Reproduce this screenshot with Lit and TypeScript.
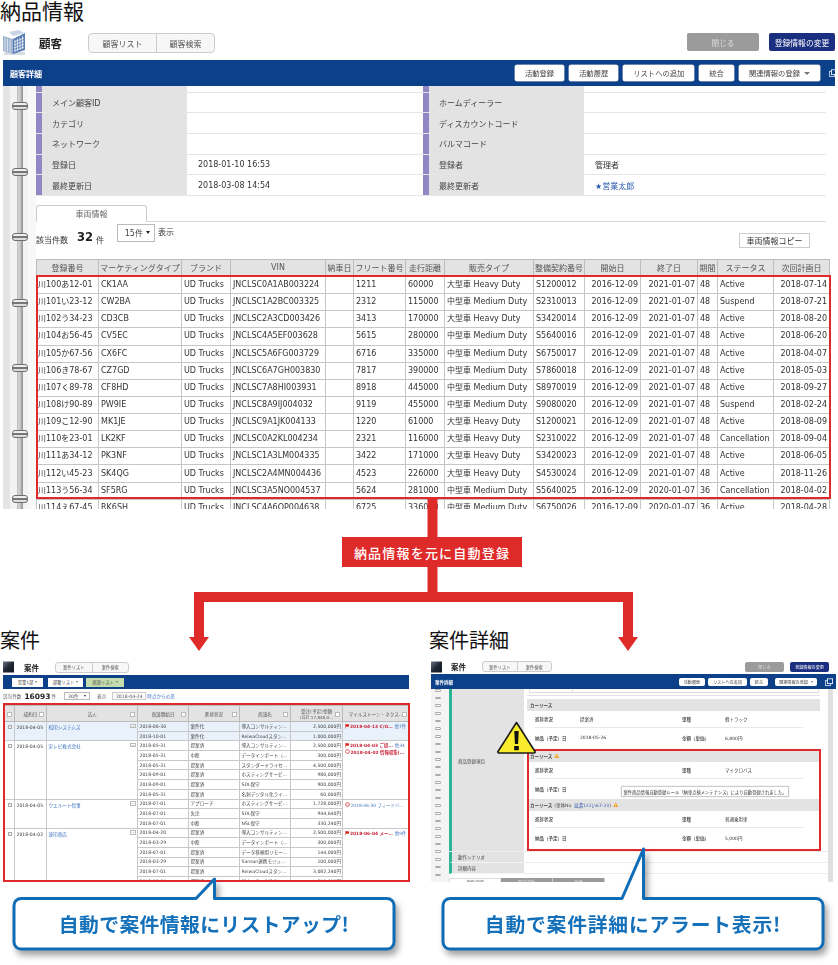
import { LitElement, html, css, svg } from "lit";
import { customElement } from "lit/decorators.js";

type Row = string[];
const H = "大型車 Heavy Duty";
const M = "中型車 Medium Duty";
const D1 = "2016-12-09";
const D2 = "2021-01-07";
const vehicleRows: Row[] = [
  ["川100あ12-01","CK1AA","JNCLSC0A1AB003224","1211","60000",H,"S1200012",D2,"48","Active","2018-07-14"],
  ["川101い23-12","CW2BA","JNCLSC1A2BC003325","2312","115000",M,"S2310013",D2,"48","Suspend","2018-07-21"],
  ["川102う34-23","CD3CB","JNCLSC2A3CD003426","3413","170000",H,"S3420014",D2,"48","Active","2018-08-20"],
  ["川104お56-45","CV5EC","JNCLSC4A5EF003628","5615","280000",M,"S5640016",D2,"48","Active","2018-06-20"],
  ["川105か67-56","CX6FC","JNCLSC5A6FG003729","6716","335000",M,"S6750017",D2,"48","Active","2018-04-07"],
  ["川106き78-67","CZ7GD","JNCLSC6A7GH003830","7817","390000",M,"S7860018",D2,"48","Active","2018-05-03"],
  ["川107く89-78","CF8HD","JNCLSC7A8HI003931","8918","445000",M,"S8970019",D2,"48","Active","2018-09-27"],
  ["川108け90-89","PW9IE","JNCLSC8A9IJ004032","9119","455000",M,"S9080020",D2,"48","Suspend","2018-02-24"],
  ["川109こ12-90","MK1JE","JNCLSC9A1JK004133","1220","61000",H,"S1200021",D2,"48","Active","2018-08-09"],
  ["川110を23-01","LK2KF","JNCLSC0A2KL004234","2321","116000",H,"S2310022",D2,"48","Cancellation","2018-09-04"],
  ["川111あ34-12","PK3NF","JNCLSC1A3LM004335","3422","171000",H,"S3420023",D2,"48","Active","2018-06-05"],
  ["川112い45-23","SK4QG","JNCLSC2A4MN004436","4523","226000",H,"S4530024",D2,"48","Active","2018-11-26"],
  ["川113う56-34","SF5RG","JNCLSC3A5NO004537","5624","281000",M,"S5640025","2020-01-07","36","Cancellation","2018-04-02"],
  ["川114え67-45","RK6SH","JNCLSC4A6OP004638","6725","336000",M,"S6750026","2020-01-07","36","Active","2018-04-28"],
];
const vehicleCols = [62,83,49,95,28,52,39,89,51,56,57,20,56,56];
const vehicleHead = ["登録番号","マーケティングタイプ","ブランド","VIN","納車日","フリート番号","走行距離","販売タイプ","整備契約番号","開始日","終了日","期間","ステータス","次回計画日"];

const infoRows: [string,string,string,string][] = [
  ["メイン顧客ID","","ホームディーラー",""],
  ["カテゴリ","","ディスカウントコード",""],
  ["ネットワーク","","バルマコード",""],
  ["登録日","2018-01-10 16:53","登録者","管理者"],
  ["最終更新日","2018-03-08 14:54","最終更新者","★営業太郎"],
];

interface Deal { date: string; name: string; blue?: boolean; ms: [string,string,string][]; subs: string[][]; }
const deals: Deal[] = [
  { date:"2018-04-05", name:"松印システムズ", blue:true, ms:[["flag","2018-04-13 C/O…","他7件"]], subs:[
    ["2018-06-30","案件化","導入コンサルティン…","2,500,000円"],
    ["2018-10-01","案件化","ReiwaCloudスタン…","1,000,000円"] ]},
  { date:"2018-04-05", name:"実レビ株式会社", ms:[["flag","2018-04-03 ご提…","他34"],["ring","2018-04-02 情報収集(…",""]], subs:[
    ["2018-05-31","提案済","導入コンサルティン…","2,500,000円"],
    ["2018-05-31","中断","データインポート（…","300,000円"],
    ["2018-05-31","提案済","スタンダードライセ…","4,500,000円"],
    ["2018-09-01","提案済","ホスティングサービ…","980,000円"],
    ["2018-09-01","提案済","SDL保守","900,000円"],
    ["2018-05-31","提案済","名刺デジタル化ライ…","60,000円"] ]},
  { date:"2018-04-05", name:"ウエルート信事", ms:[["ring2","2018-06-30 フィードバ…",""]], subs:[
    ["2018-07-01","アプローチ","ホスティングサービ…","1,728,000円"],
    ["2018-07-01","失注","SDL保守","944,640円"],
    ["2018-07-01","中断","NSL保守","330,240円"] ]},
  { date:"2018-04-02", name:"波印商店", ms:[["flag","2018-06-04 メー…","他9件"]], subs:[
    ["2018-04-20","提案済","導入コンサルティン…","2,500,000円"],
    ["2018-03-29","中断","データインポート（…","300,000円"],
    ["2018-07-01","提案済","データ移植用リモー…","144,000円"],
    ["2018-03-29","提案済","Sansan連携モジュ…","100,000円"],
    ["2018-07-01","提案済","ReiwaCloudスタン…","3,082,240円"],
    ["2018-07-01","提案済","アナリティクスライ…","210,000円"] ]},
];
const dealCols = [10,32,91,51,51,51,52,67];

const leaseSections = [
  { head:"カーリース", warn:false, note:"", a:"提案済", b:"軽トラック", c:"2018-05-26", d:"6,800円" },
  { head:"カーリース", warn:true, note:"", a:"", b:"マイクロバス", c:"", d:"" },
  { head:"カーリース", warn:true, note:"滋濃122い67-23", a:"", b:"普通乗用車", c:"", d:"5,000円" },
];

const building = svg`<svg class="bldg" viewBox="0 0 23 25" width="23" height="25">
  <rect x="1" y="22" width="21" height="3" fill="#d8dde4"/>
  <polygon points="0,6 10,9 10,24 0,21" fill="#9fb2cf"/>
  <polygon points="10,9 22,3 22,20 10,24" fill="#5a7fb4"/>
  <polygon points="6,2 16,0 21,3 10,6" fill="#c9d5e6"/>
  <g stroke="#e6edf6" stroke-width=".8">
    <path d="M12 10v12M14.5 9v12M17 8v12M19.5 6v13M11 12l10-4M11 15l10-4M11 18l10-4M11 21l10-4"/>
    <path d="M2 8v13M4.500 8.700v13M7 9.400v13"/>
  </g></svg>`;
const darkBlock = svg`<svg viewBox="0 0 11 12" width="11" height="12"><defs><linearGradient id="db" x1="0" y1="0" x2="1" y2="1"><stop offset="0" stop-color="#6c7582"/><stop offset=".5" stop-color="#1f2735"/><stop offset="1" stop-color="#12161f"/></linearGradient></defs><rect width="11" height="11" y=".5" fill="url(#db)"/></svg>`;
const winIcon = svg`<svg viewBox="0 0 10 10" width="8" height="8" fill="none" stroke="#fff" stroke-width="1"><rect x="3" y="1" width="6.500" height="6"/><path d="M3 3H.5v6.500H7V7"/></svg>`;
const flag = svg`<svg class="ms" viewBox="0 0 5 5" width="4.500" height="4.500"><path d="M.5 0v5" stroke="#c33" stroke-width=".7"/><path d="M.8 .3H4.500V3H.8z" fill="#d21"/></svg>`;
const ring = svg`<svg class="ms" viewBox="0 0 5 5" width="5" height="5"><circle cx="2.500" cy="2.500" r="1.900" fill="none" stroke="#c22" stroke-width=".7"/></svg>`;
const warn = svg`<svg class="warn" viewBox="0 0 6 6" width="5.500" height="5.500"><path d="M3 .3 5.800 5.500H.2z" fill="#f0a020"/><path d="M3 2v1.900M3 4.400v.5" stroke="#fff" stroke-width=".7"/></svg>`;

@customElement("app-root")
export class AppRoot extends LitElement {
  static styles = css`
    :host { display:block; width:838px; height:965px; position:relative; overflow:hidden; background:#fff;
      font-family:"DejaVu Sans","Noto Sans CJK JP",sans-serif; color:#333; }
    * { box-sizing:border-box; }
    h2 { margin:0; font:400 21px/26px "Noto Sans CJK JP",sans-serif; color:#111; white-space:nowrap; }
    .title-top { height:26px; line-height:20px; }
    .blur { filter:blur(.35px); }

    /* top screenshot */
    .shot1 { width:838px; height:483px; overflow:hidden; font-size:8px; }
    .head { display:flex; align-items:center; padding-left:3px; }
    .shot1 .head { height:34px; padding-right:3px; }
    .bldg { flex:none; margin-top:-2px; }
    .head-name { font:700 11.500px "Noto Sans CJK JP",sans-serif; color:#222; }
    .shot1 .head-name { margin-left:13px; }
    .tabs { display:flex; border:1px solid #ccc; border-radius:4px; background:#f7f7f7; color:#555; }
    .tabs span { display:flex; align-items:center; justify-content:center; }
    .tabs span + span { border-left:1px solid #ccc; }
    .shot1 .tabs { margin-left:26px; height:20px; width:127px; font-size:8px; }
    .shot1 .tabs span:first-child { width:67px; } .shot1 .tabs span:last-child { flex:1; }
    .head-btns { margin-left:auto; display:flex; }
    .hb { display:flex; align-items:center; justify-content:center; border-radius:2px; color:#fff; }
    .hb.grey { background:#9b9b9b; color:#ddd; } .hb.navy { background:#1a2f7f; }
    .shot1 .head-btns { gap:10px; }
    .shot1 .hb { height:18px; font-size:7.600px; margin-top:-2px; }
    .shot1 .hb.grey { width:72px; } .shot1 .hb.navy { width:66px; font-size:7.800px; }

    .bar { background:#0c4089; display:flex; align-items:center; color:#fff; overflow:hidden; }
    .bar b { font-weight:700; }
    .bar .acts { margin-left:auto; display:flex; align-items:center; }
    .bb { background:#fff; color:#444; border-radius:2px; display:flex; align-items:center; justify-content:center; white-space:nowrap; }
    .caret { display:inline-block; border:solid transparent; border-top-color:#777; }
    .shot1 .bar { margin-left:3px; width:832px; height:26px; padding-left:7px; font-size:8px; }
    .shot1 .acts { gap:5px; }
    .shot1 .bb { height:16px; padding:0 10px; font-size:7.300px; box-shadow:0 0 0 .5px #ccd; }
    .shot1 .caret { border-width:3px 3px 0; margin-left:4px; }
    .shot1 .bar svg { margin:0 -2px 0 4px; flex:none; }

    .body1 { display:flex; height:423px; margin-left:3px; }
    .rings1 { width:33px; flex:none; padding-top:16px; display:flex; flex-direction:column; align-items:flex-start; gap:57.500px;
      background:linear-gradient(90deg,#e4e4e4 0 7px,#f3f3f3 7px 14px,#b5b5b5 14px,#d8d8d8 16px,#8f8f8f 20px,#f3f3f3 20px 25px,#f8f8f8 25px); }
    .ring1 { width:16px; height:8px; margin-left:9px; flex:none; border:1px solid #6f6f6f; border-radius:3px; background:linear-gradient(#eee 0 2px,#777 2px 4px,#ddd 4px); }
    .main1 { width:795px; flex:none; }
    .info { width:790px; }
    .irow { display:grid; grid-template-columns:387px 403px; height:20.700px; border-bottom:1px solid #e6e6e6; }
    .irow.stub { height:6.500px; }
    .icell { display:flex; height:100%; }
    .ilabel { width:151px; flex:none; background:#e3e3e3; border-left:6px solid #9087c4; padding-left:10px; display:flex; align-items:center; color:#444; white-space:nowrap; }
    .icell + .icell .ilabel { width:161px; }
    .ival { padding-left:11px; display:flex; align-items:center; white-space:nowrap; color:#333; }
    .ival.link { color:#2a5ab0; }
    .tabline { margin-top:9px; width:790px; height:17px; border-bottom:1px solid #d8d8d8; }
    .vtab { width:111px; height:17px; border:1px solid #ccc; border-bottom-color:#fff; border-radius:3px 3px 0 0; display:flex; align-items:center; justify-content:center; color:#666; background:#fff; }
    .count { display:flex; height:37px; align-items:flex-start; width:774px; }
    .c-label { margin-top:12px; white-space:nowrap; }
    .c-num { margin:8px 3px 0 9px; font:700 11.500px/14px "DejaVu Sans",sans-serif; color:#222; }
    .select { margin:2px 0 0 13px; width:38px; height:18px; border:1px solid #bbb; display:flex; align-items:center; justify-content:space-around; padding:0 2px 0 5px; background:#fff; color:#444; }
    .select i { border:solid transparent; border-width:3px 2px 0; border-top-color:#222; }
    .c-show { margin:4px 0 0 3px; }
    .copy { margin:11px 0 0 auto; width:71px; height:15px; border:1px solid #ccc; display:flex; align-items:center; justify-content:center; color:#333; }

    table { border-collapse:collapse; table-layout:fixed; }
    .vt { width:793px; font-size:8px; }
    .vt th { height:17px; background:#e3e3e3; font-weight:400; color:#555; border:1px solid #bdbdbd; padding:0; white-space:nowrap; overflow:hidden; }
    .vt td { height:17.150px; border:1px solid #c6c6c6; padding:0 0 0 2px; white-space:nowrap; overflow:hidden; color:#333; line-height:10px; }
    .vt td.r { text-align:right; padding:0 2px 0 0; }
    .vt td:first-child { padding-left:1px; }

    /* connector + frames */
    .frame { position:absolute; border:2px solid #e0292b; pointer-events:none; }
    .f1 { left:36px; top:275px; width:795px; height:224px; }
    .f2 { left:3px; top:703px; width:407px; height:179px; }
    .f3 { left:527px; top:749px; width:294px; height:102px; }
    .conn { position:absolute; left:189px; top:497px; }
    .conn-label { position:absolute; left:342px; top:537px; width:180px; height:30px; background:#df2a2a; color:#fff;
      display:flex; align-items:center; justify-content:center; font:500 13px "Noto Sans CJK JP",sans-serif; letter-spacing:1.200px; }

    .lower { display:grid; grid-template-columns:429px 409px; margin-top:116px; }
    .lower h2 { height:34px; font-size:20px; line-height:30px; }

    /* deals list */
    .shot2 { margin-left:3px; width:406px; height:223px; overflow:hidden; font-size:4.600px; }
    .shot2 .head { height:16px; padding-left:0; }
    .shot2 .head-name { font-size:7.500px; margin-left:10px; }
    .shot2 .tabs, .shot3 .tabs { height:11px; width:74px; font-size:4.300px; border-radius:3px; margin-left:16px; }
    .shot2 .tabs span, .shot3 .tabs span { flex:1; }
    .shot2 .bar { height:14px; padding-left:9px; gap:5px; }
    .chip { height:9px; background:#fff; color:#444; display:flex; align-items:center; justify-content:center; gap:2px; font-size:4.300px; }
    .chip.c1 { width:31px; } .chip.c2 { width:35px; } .chip.c3 { width:38px; background:#c5dcae; margin-left:-2px; }
    .chip .caret { border-width:2px 1.500px 0; }
    .meta { height:14px; display:flex; align-items:center; color:#555; white-space:nowrap; }
    .meta b { font-size:7.500px; margin:0 1px 0 3px; color:#222; }
    .msel { width:26px; height:8px; border:.5px solid #bbb; margin-left:8px; display:flex; align-items:center; justify-content:space-between; padding:0 3px; }
    .msel i { border:solid transparent; border-width:2px 1.500px 0; border-top-color:#222; }
    .mshow { margin-left:7px; }
    .mdate { width:34px; height:8px; border:.5px solid #ccc; margin:0 1px 0 6px; display:flex; align-items:center; justify-content:center; }
    .mlink { color:#3a6fc0; }
    .dt-wrap { padding:2px 0 0 1px; }
    .dt { width:405px; }
    .dt th { height:16px; background:#e3e3e3; font-weight:400; border:.5px solid #bbb; padding:0; position:relative; color:#555; white-space:nowrap; }
    .dt th i { position:absolute; right:2px; top:6px; width:5px; height:5px; background:#fff; border:.5px solid #bbb; }
    .dt th small { display:block; font-size:4.100px; }
    .dt td { height:9.700px; border:.5px solid #c8c8c8; padding:0 0 0 1.500px; white-space:nowrap; overflow:hidden; line-height:7px; color:#444; vertical-align:middle; }
    .dt td.top { vertical-align:top; padding-top:2px; position:relative; }
    .dt td.r { text-align:right; padding:0 1px 0 0; }
    .dt tbody.alt td { background:#e9f1fa; }
    .cb { display:block; width:4px; height:4px; border:.5px solid #aaa; background:#eee; margin:1px 0 0 1.500px; }
    .minus { position:absolute; right:1px; top:1.500px; width:6px; height:4.500px; background:#fff; border:.5px solid #bbb; text-align:center; line-height:3px; }
    .nm { color:#3a6fc0; }
    .ms { vertical-align:-.5px; margin-right:1px; }
    .ms-line { color:#c8283a; line-height:6px; font-weight:700; font-size:4.400px; }
    .ms-line.blue { color:#4a78c0; font-weight:400; }
    .ms-line em { font-style:normal; font-weight:400; color:#4a78c0; margin-left:2px; }

    /* deal detail */
    .shot3 { margin-left:2px; width:405px; height:223px; overflow:hidden; font-size:4.500px; }
    .shot3 .head { height:15px; padding:0 7px 0 0; }
    .shot3 .head-name { font-size:7.500px; margin-left:9px; }
    .shot3 .tabs { width:70px; margin-left:16px; }
    .shot3 .head-btns { gap:6px; }
    .shot3 .hb { width:39px; height:10px; font-size:4.100px; }
    .shot3 .bar { height:15px; padding-left:4px; }
    .shot3 .acts { gap:3px; }
    .shot3 .bb { height:8px; padding:0 5px; font-size:4.100px; }
    .shot3 .bb.rel { gap:3px; padding:0 4px; margin-left:4px; width:42px; }
    .shot3 .bb .caret { border-width:2px 1.500px 0; }
    .shot3 .bar svg { margin:0 3px 0 5px; flex:none; }
    .body3 { display:flex; height:193px; }
    .rings3 { width:18px; flex:none; padding:0 0 0 4px; display:flex; flex-direction:column; gap:5.200px; background:#f4f4f4; overflow:hidden; }
    .ring3 { flex:none; width:6px; height:2.500px; border:.6px solid #aaa; background:#fff; border-radius:1px; }
    .main3 { width:379px; flex:none; }
    .srow { display:flex; border-bottom:1px solid #ececec; }
    .slabel { width:75px; flex:none; background:#e3e3e3; border-left:3px solid #2bb596; padding-left:6px; color:#444; white-space:nowrap; }
    .srow.tall .slabel { height:162px; padding-top:69px; }
    .srow.small .slabel, .srow.small { height:11px; }
    .srow.small .slabel { display:flex; align-items:center; border-bottom:1px solid #f4f4f4; }
    .scontent { width:296px; padding-left:3px; }
    .stub3 { width:290px; height:4px; margin-left:2px; border:1px solid #ddd; border-top:0; display:flex; }
    .stub3 span { width:43px; border-right:1px solid #ddd; }
    .stub3-line { height:1px; background:#e3e3e3; margin:2px 0 3px; width:293px; }
    .sec { width:293px; }
    .sec.first { margin-bottom:2px; }
    .sec-head { height:12px; background:#e3e3e3; display:flex; align-items:center; gap:2px; padding-left:3px; font-weight:700; color:#444; white-space:nowrap; }
    .sec-head span { font-weight:400; }
    .sec-head a { color:#3a5fb0; }
    .sec-row { display:grid; grid-template-columns:45px 102px 43px 1fr; align-items:center; margin-left:8px; width:268px; color:#333; border-bottom:1px solid #e8e8e8; white-space:nowrap; }
    .sec-row.h1 { height:17px; } .sec-row.h2 { height:20px; border-color:transparent; }
    .sec-row b { font-weight:500; }
    .stabs { display:flex; margin-top:4px; height:8px; font-size:4.300px; }
    .stabs span { width:52px; display:flex; align-items:center; justify-content:center; background:#9a9a9a; color:#ddd; border-right:.5px solid #ccc; }
    .stabs span:first-child { background:#fff; color:#555; border:.5px solid #ddd; }
    .scroll { width:5px; flex:none; background:#e0e0e0; }
    .tooltip { position:absolute; left:621px; top:786px; width:168px; height:11px; background:#fff; border:.7px solid #ccc; border-radius:1px; font-size:4.300px; display:flex; align-items:center; justify-content:center; color:#333; white-space:nowrap; box-shadow:0 0 1px #999; }
    .triangle { position:absolute; left:497px; top:720px; }

    /* callouts */
    .call { position:absolute; top:0; left:0; filter:drop-shadow(3px 5px 3px rgba(90,90,90,.55)); }
    .call-text { position:absolute; top:898px; height:51px; display:flex; align-items:center; justify-content:center;
      font:700 19.800px "Noto Sans CJK JP",sans-serif; color:#1570ba; white-space:nowrap; }
    .t1 { left:13px; width:382px; letter-spacing:.4px; }
    .t2 { left:442px; width:382px; letter-spacing:.8px; }
  `;

  private vehicleTable() {
    return html`<table class="vt">
      <colgroup>${vehicleCols.map(w => html`<col style="width:${w}px">`)}</colgroup>
      <thead><tr>${vehicleHead.map(h => html`<th>${h}</th>`)}</tr></thead>
      <tbody>${vehicleRows.map(r => html`<tr>
        <td>${r[0]}</td><td>${r[1]}</td><td>UD Trucks</td><td>${r[2]}</td><td></td><td>${r[3]}</td><td>${r[4]}</td>
        <td>${r[5]}</td><td>${r[6]}</td><td class="r">${D1}</td><td class="r">${r[7]}</td><td>${r[8]}</td><td>${r[9]}</td><td class="r">${r[10]}</td>
      </tr>`)}</tbody></table>`;
  }

  private dealRows(d: Deal, i: number) {
    const n = d.subs.length;
    return html`<tbody class=${i === 0 ? "alt" : ""}>${d.subs.map((s, k) => html`<tr>
      ${k === 0 ? html`
        <td class="top" rowspan=${n}><span class="cb"></span></td>
        <td class="top" rowspan=${n}>${d.date}</td>
        <td class="top" rowspan=${n}><span class="nm">${d.name}</span><span class="minus">-</span></td>` : ""}
      <td>${s[0]}</td><td>${s[1]}</td><td>${s[2]}</td><td class="r">${s[3]}</td>
      ${k === 0 ? html`<td class="top" rowspan=${n}>${d.ms.map(m => html`<div class="ms-line ${m[0] === "ring2" ? "blue" : ""}">${m[0] === "flag" ? flag : ring}${m[1]}${m[2] ? html`<em>${m[2]}</em>` : ""}</div>`)}</td>` : ""}
    </tr>`)}</tbody>`;
  }

  private section(s: typeof leaseSections[number], first: boolean, i: number) {
    return html`<div class="sec ${first ? "first" : ""}">
      <div class="sec-head">カーリース${i === 2 ? html`<span>(車体No. <a>${s.note}</a>)</span>` : ""}${s.warn ? warn : ""}</div>
      <div class="sec-row h1"><b>進捗状況</b><span>${s.a}</span><b>車種</b><span>${s.b}</span></div>
      <div class="sec-row h2"><b>納品（予定）日</b><span>${s.c}</span><b>金額（単価）</b><span>${s.d}</span></div>
    </div>`;
  }

  render() {
    return html`
      <h2 class="title-top">納品情報</h2>
      <section class="shot1 blur">
        <div class="head">
          ${building}
          <span class="head-name">顧客</span>
          <div class="tabs"><span>顧客リスト</span><span>顧客検索</span></div>
          <div class="head-btns"><span class="hb grey">閉じる</span><span class="hb navy">登録情報の変更</span></div>
        </div>
        <div class="bar">
          <b>顧客詳細</b>
          <div class="acts">
            <span class="bb">活動登録</span><span class="bb">活動履歴</span><span class="bb">リストへの追加</span><span class="bb">統合</span>
            <span class="bb">関連情報の登録<i class="caret"></i></span>${winIcon}
          </div>
        </div>
        <div class="body1">
          <div class="rings1">${Array.from({ length: 7 }, () => html`<span class="ring1"></span>`)}</div>
          <div class="main1">
            <div class="info">
              <div class="irow stub"><div class="icell"><span class="ilabel"></span></div><div class="icell"><span class="ilabel"></span></div></div>
              ${infoRows.map(r => html`<div class="irow">
                <div class="icell"><span class="ilabel">${r[0]}</span><span class="ival">${r[1]}</span></div>
                <div class="icell"><span class="ilabel">${r[2]}</span><span class="ival ${r[3].startsWith("★") ? "link" : ""}">${r[3]}</span></div>
              </div>`)}
            </div>
            <div class="tabline"><div class="vtab">車両情報</div></div>
            <div class="count">
              <span class="c-label">該当件数</span><span class="c-num">32</span><span class="c-label">件</span>
              <div class="select">15件<i></i></div><span class="c-show">表示</span>
              <span class="copy">車両情報コピー</span>
            </div>
            ${this.vehicleTable()}
          </div>
        </div>
      </section>

      <div class="lower">
        <div>
          <h2>案件</h2>
          <section class="shot2 blur">
            <div class="head">${darkBlock}<span class="head-name">案件</span>
              <div class="tabs"><span>案件リスト</span><span>案件検索</span></div></div>
            <div class="bar">
              <span class="chip c1">営業1部<i class="caret"></i></span>
              <span class="chip c2">部署リスト<i class="caret"></i></span>
              <span class="chip c3">商談リスト<i class="caret"></i></span>
            </div>
            <div class="meta">該当件数<b>16093</b>件<span class="msel">30件<i></i></span><span class="mshow">表示</span><span class="mdate">2018-04-24</span><span class="mlink">時点からの差</span></div>
            <div class="dt-wrap">
              <table class="dt">
                <colgroup>${dealCols.map(w => html`<col style="width:${w}px">`)}</colgroup>
                <thead><tr>
                  <th><i></i></th><th>成約日<i></i></th><th>法人<i></i></th><th>商談開始日<i></i></th><th>進捗状況<i></i></th><th>商談名<i></i></th>
                  <th>受注(予定)金額<small>(合計 17,848,0…</small><i></i></th><th>マイルストーン・ネクス…<i></i></th>
                </tr></thead>
                ${deals.map((d, i) => this.dealRows(d, i))}
              </table>
            </div>
          </section>
        </div>
        <div>
          <h2>案件詳細</h2>
          <section class="shot3 blur">
            <div class="head">${darkBlock}<span class="head-name">案件</span>
              <div class="tabs"><span>案件リスト</span><span>案件検索</span></div>
              <div class="head-btns"><span class="hb grey">閉じる</span><span class="hb navy">登録情報の変更</span></div></div>
            <div class="bar"><b>案件詳細</b>
              <div class="acts"><span class="bb">活動履歴</span><span class="bb">リストへの追加</span><span class="bb">統合</span>
                <span class="bb rel">関連情報の登録<i class="caret"></i></span>${winIcon}</div></div>
            <div class="body3">
              <div class="rings3">${Array.from({ length: 25 }, () => html`<span class="ring3"></span>`)}</div>
              <div class="main3">
                <div class="srow tall"><div class="slabel">商品登録項目</div>
                  <div class="scontent">
                    <div class="stub3"><span></span></div><div class="stub3-line"></div>
                    ${leaseSections.map((s, i) => this.section(s, i === 0, i))}
                  </div></div>
                <div class="srow small"><div class="slabel">動作シナリオ</div></div>
                <div class="srow small"><div class="slabel">詳細内容</div></div>
                <div class="stabs"><span>案件詳細</span><span>関連活動</span><span>履歴</span></div>
              </div>
              <div class="scroll"></div>
            </div>
          </section>
        </div>
      </div>

      <div class="frame f1"></div>
      <div class="frame f2"></div>
      <div class="frame f3"></div>
      <div class="tooltip blur">案件商品情報自動登録ルール「納車点検メンテナンス」により自動登録されました。</div>
      <svg class="triangle" width="40" height="35" viewBox="0 0 40 35">
        <path d="M19.500 2.500 38 31.500a1 1 0 0 1-1 1.500H2a1 1 0 0 1-1-1.500z" fill="#f8ec2c" stroke="#1c1c1c" stroke-width="1.600" stroke-linejoin="round"/>
        <path d="M17.300 11h4.400l-.6 13h-3.200z" fill="#111"/><rect x="17.200" y="26" width="4.600" height="4.200" fill="#111"/>
      </svg>

      <svg class="conn" width="460" height="154" viewBox="0 0 460 154">
        <path fill="#df2a2a" d="M238.500 0h10v95h195.500v45h5l-10 14-10-14h5V105H15v35h5L10 154 0 140h5V95h233.500z"/>
      </svg>
      <div class="conn-label">納品情報を元に自動登録</div>

      <svg class="call" width="838" height="965" viewBox="0 0 838 965">
        <path fill="#fff" stroke="#0f6db8" stroke-width="3" stroke-linejoin="round"
          d="M21 898.500H196L214.500 879V898.500H387a7 7 0 0 1 7 7V942a7 7 0 0 1-7 7H21a7 7 0 0 1-7-7V905.500a7 7 0 0 1 7-7z"/>
        <path fill="#fff" stroke="#0f6db8" stroke-width="3" stroke-linejoin="round"
          d="M450 898.500H622L643.500 849V898.500H816a7 7 0 0 1 7 7V942a7 7 0 0 1-7 7H450a7 7 0 0 1-7-7V905.500a7 7 0 0 1 7-7z"/>
      </svg>
      <div class="call-text t1">自動で案件情報にリストアップ!</div>
      <div class="call-text t2">自動で案件詳細にアラート表示!</div>
    `;
  }
}
